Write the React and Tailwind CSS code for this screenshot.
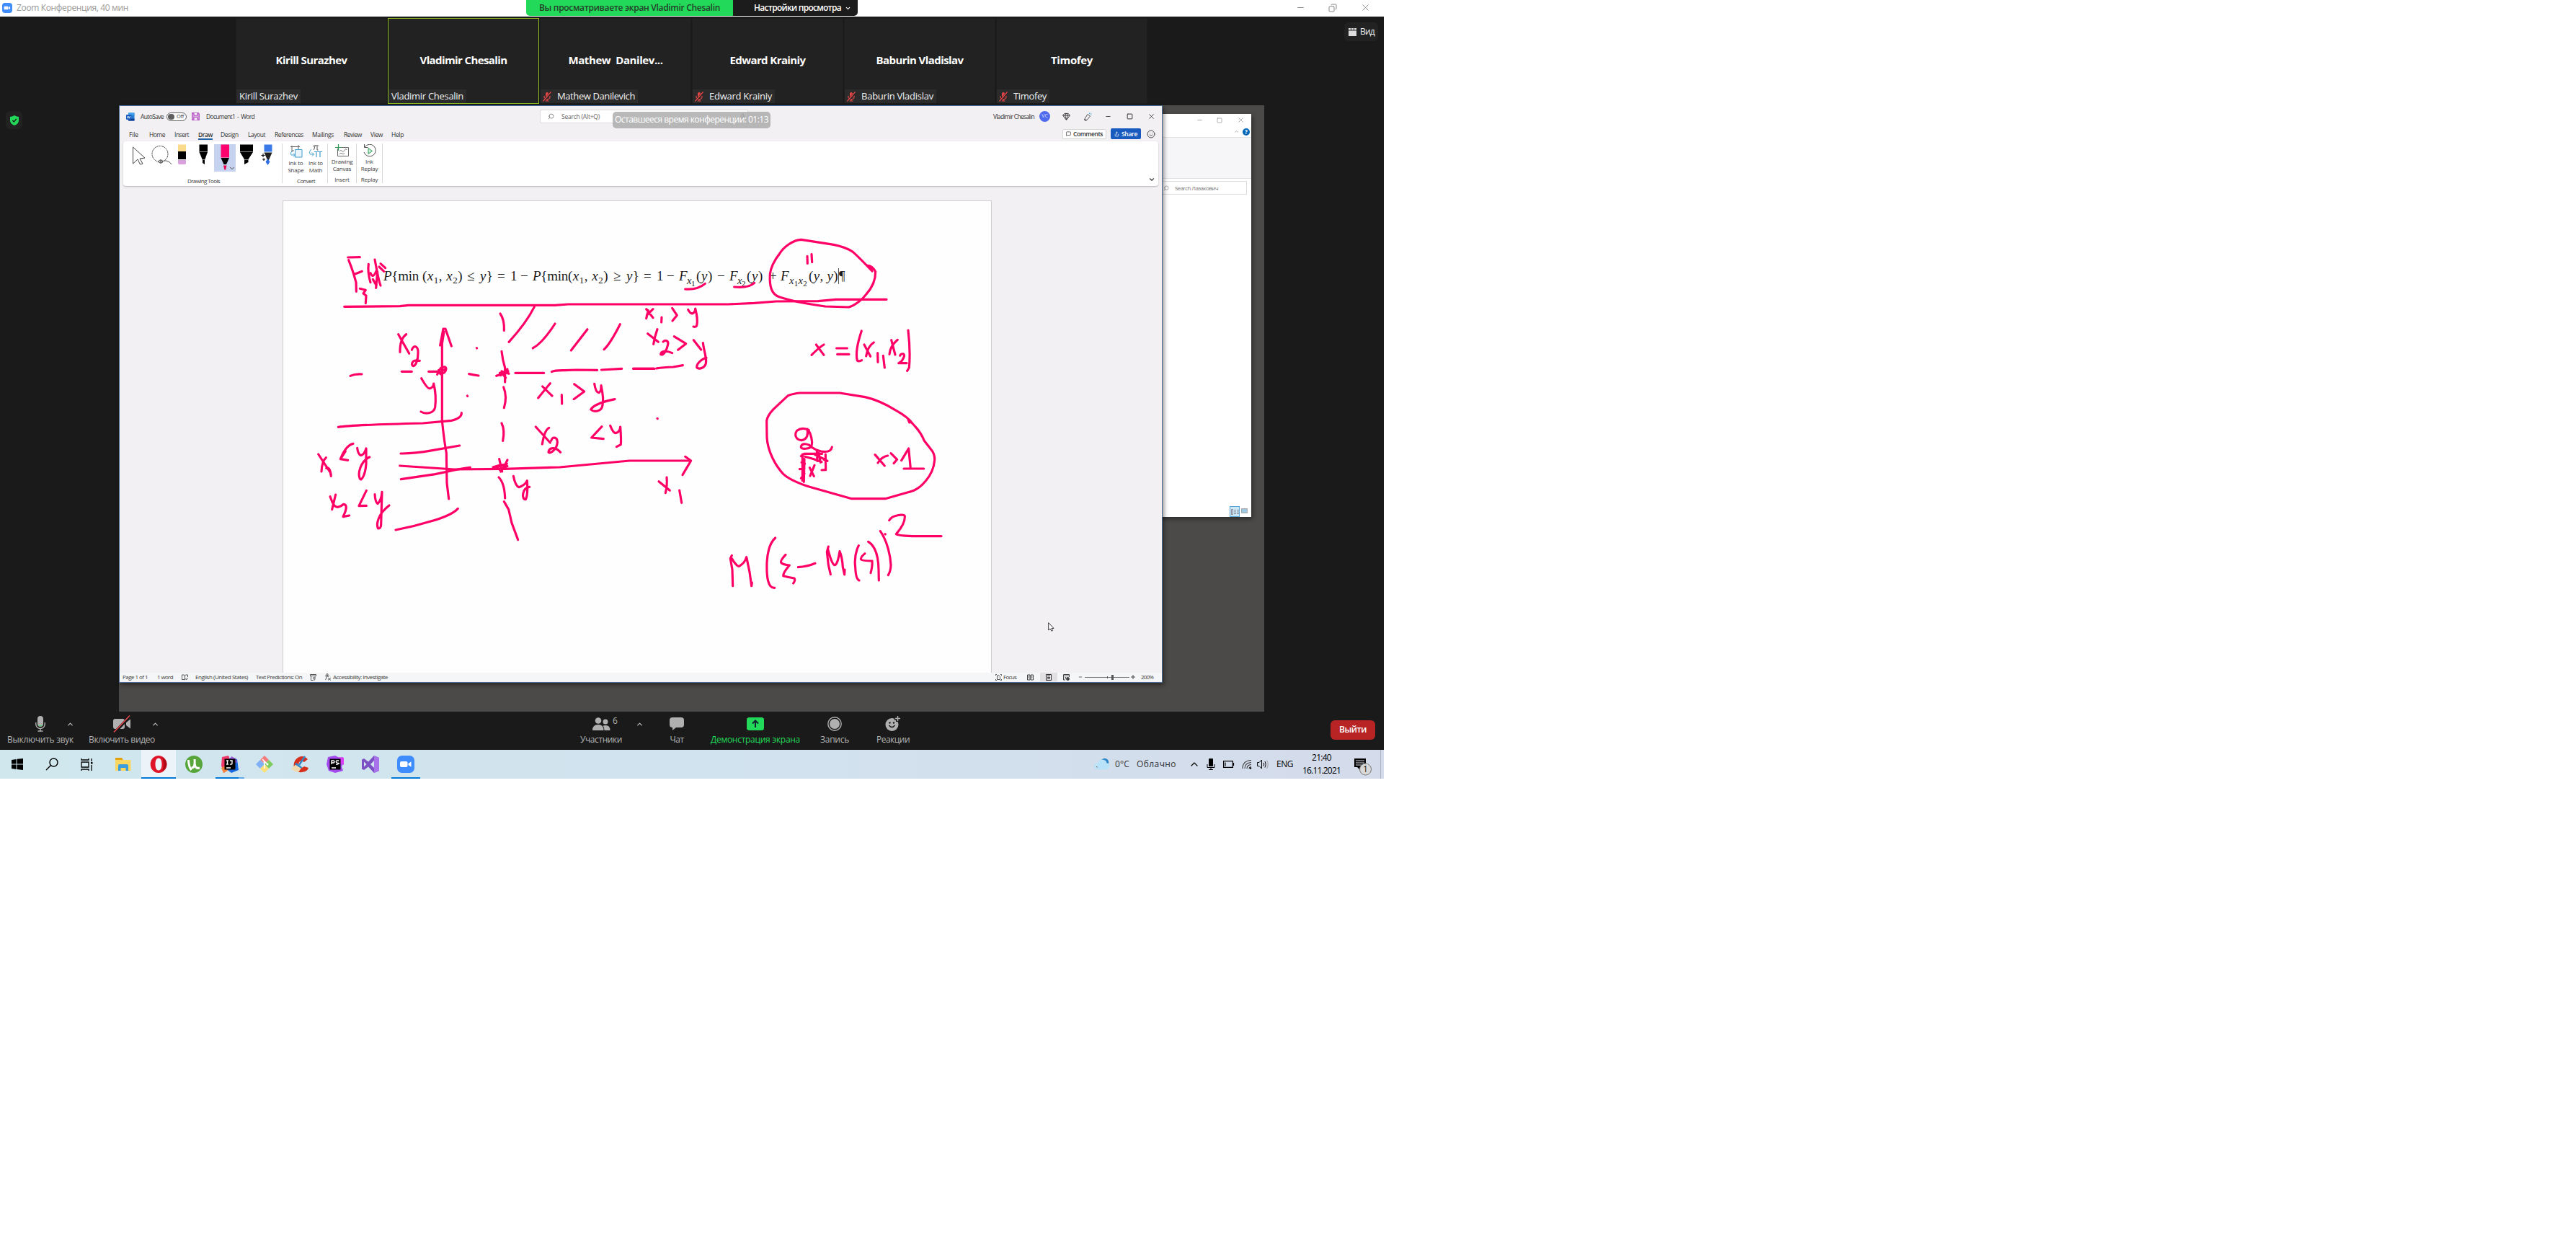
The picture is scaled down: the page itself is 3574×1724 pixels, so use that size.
import React, { useLayoutEffect, useRef } from "react";
import { Minus, Copy, X, Square, ChevronUp, ChevronDown, Search, Gem, MessageSquare, Mic, Share as ShareIcon, Smile } from "lucide-react";

/* One line of text whose tracking is adjusted to fill the width of its box. */
function Fit({ className = "", children }) {
  const box = useRef(null);
  const inner = useRef(null);
  useLayoutEffect(() => {
    const n = inner.current.textContent.length;
    inner.current.style.letterSpacing = "0px";
    const diff = box.current.clientWidth - inner.current.getBoundingClientRect().width;
    inner.current.style.letterSpacing = `${diff / n}px`;
  }, []);
  return (
    <span ref={box} className={"block shrink-0 whitespace-nowrap leading-[1.4] " + className}>
      <span ref={inner} className="inline-block whitespace-pre">{children}</span>
    </span>
  );
}

function ZoomLogo({ className }) {
  return (
    <svg viewBox="0 0 24 24" className={className}>
      <rect width="24" height="24" rx="7" fill="#3f8cfd" />
      <rect x="4.5" y="8" width="10" height="8" rx="2" fill="#fff" />
      <path d="M15.3 11 L19 8.3 V15.7 L15.3 13 Z" fill="#fff" />
    </svg>
  );
}

function TitleBar() {
  return (
    <header className="flex h-[23px] items-start bg-white text-[12px]">
      <ZoomLogo className="ml-[3px] mt-[4px] h-[14px] w-[14px]" />
      <Fit className="ml-[6px] mt-[3px] w-[155px] text-[#999]">Zoom Конференция, 40 мин</Fit>
      <div className="ml-[552px] flex h-[22px] w-[287px] items-center rounded-bl-[5px] bg-[#23d959] pl-[18px]">
        <Fit className="w-[251px] font-semibold text-[#24402a]">Вы просматриваете экран Vladimir Chesalin</Fit>
      </div>
      <div className="flex h-[22px] w-[173px] items-center rounded-br-[5px] bg-[#1c1c1c] pl-[29px] text-white">
        <Fit className="w-[121px] font-semibold">Настройки просмотра</Fit>
        <ChevronDown className="ml-[5px] h-[9px] w-[9px]" strokeWidth={3} />
      </div>
      <div className="ml-[608px] flex h-[21px] items-center text-[#888]">
        <Minus className="h-[13px] w-[13px]" strokeWidth={1.8} />
        <Copy className="ml-[32px] h-[12px] w-[12px] -scale-x-100" strokeWidth={2} />
        <X className="ml-[32px] h-[15px] w-[15px]" strokeWidth={1.6} />
      </div>
    </header>
  );
}

const people = [
  { name: "Kirill Surazhev", label: "Kirill Surazhev", nw: "w-[99px]", lw: "w-[81px]" },
  { name: "Vladimir Chesalin", label: "Vladimir Chesalin", nw: "w-[121px]", lw: "w-[100px]", active: true },
  { name: "Mathew  Danilev...", label: "Mathew Danilevich", nw: "w-[131px]", lw: "w-[108px]", muted: true },
  { name: "Edward Krainiy", label: "Edward Krainiy", nw: "w-[105px]", lw: "w-[87px]", muted: true },
  { name: "Baburin Vladislav", label: "Baburin Vladislav", nw: "w-[121px]", lw: "w-[100px]", muted: true },
  { name: "Timofey", label: "Timofey", nw: "w-[58px]", lw: "w-[46px]", muted: true },
];

function MutedMic() {
  return (
    <svg viewBox="0 0 14 14" className="mr-[7px] h-[14px] w-[14px]">
      <rect x="5" y="1" width="4" height="7.5" rx="2" fill="#e8474a" />
      <path d="M3 6 V7.2 A4 3.6 0 0 0 11 7.2 V6 M7 11 V13 M4.5 13 H9.5" stroke="#e8474a" strokeWidth="1.2" fill="none" />
      <path d="M2 13.5 L12.5 .5" stroke="#222" strokeWidth="2.6" />
      <path d="M1.5 13.5 L12.5 .5" stroke="#e8474a" strokeWidth="1.3" />
    </svg>
  );
}

function Gallery() {
  return (
    <section className="flex h-[123px] pt-[2px]">
      <div className="ml-[327px] flex h-[119px] gap-[1px]">
        {people.map((p) => (
          <div key={p.label} className={"flex h-[119px] w-[210px] flex-col justify-between border " + (p.active ? "border-[#8fbf21] bg-[#222]" : "border-[#1d1d1d] bg-[#222]")}>
            <div className="flex h-[98px] items-end justify-center pb-[30px]">
              <Fit className={"text-[15px] font-bold text-white " + p.nw}>{p.name}</Fit>
            </div>
            <div className={"flex h-[19px] items-center self-start bg-[#2b2b2b] pr-[4px] text-[13px] text-[#f2f2f2] " + (p.muted ? "pl-[2px]" : "pl-[4px]")}>
              {p.muted && <MutedMic />}
              <Fit className={p.lw}>{p.label}</Fit>
            </div>
          </div>
        ))}
      </div>
      <div className="ml-[273px] mt-[6px] flex h-[26px] w-[47px] items-center rounded-[6px] bg-[#222] pl-[6px]">
        <svg viewBox="0 0 11 11" className="h-[11px] w-[11px]" fill="#ddd">
          <path d="M0 0H3V2.4H0Z M4 0H7V2.4H4Z M8 0H11V2.4H8Z M0 3.4H11V11H0Z" />
        </svg>
        <Fit className="ml-[5px] w-[20px] text-[12px] text-[#eee]">Вид</Fit>
      </div>
    </section>
  );
}

const tabs = [
  ["File", "ml-[13px] w-[13px]"], ["Home", "ml-[15px] w-[22px]"], ["Insert", "ml-[13px] w-[20px]"],
  ["Draw", "ml-[13px] w-[20px] font-semibold"], ["Design", "ml-[11px] w-[25px]"], ["Layout", "ml-[13px] w-[24px]"],
  ["References", "ml-[13px] w-[40px]"], ["Mailings", "ml-[12px] w-[30px]"], ["Review", "ml-[14px] w-[25px]"],
  ["View", "ml-[12px] w-[17px]"], ["Help", "ml-[12px] w-[17px]"],
];

function WordTitle() {
  return (
    <div className="flex h-[31px] items-center pb-[2px] text-[8.5px] text-[#333]">
      <svg viewBox="0 0 12 12" className="ml-[9px] h-[12px] w-[12px]">
        <rect x="3" y=".5" width="8.5" height="11" rx="1" fill="#2b7cd3" />
        <rect x="3" y=".5" width="8.5" height="3" fill="#41a5ee" />
        <rect x="3" y="8.5" width="8.5" height="3" fill="#103f91" />
        <rect x="0" y="3" width="7" height="7" rx="1" fill="#185abd" />
        <path d="M1.5 5 L2.4 8.2 L3.5 5.4 L4.6 8.2 L5.5 5" stroke="#fff" strokeWidth=".8" fill="none" />
      </svg>
      <Fit className="ml-[8px] w-[32px]">AutoSave</Fit>
      <span className="ml-[4px] flex h-[12px] w-[28px] items-center rounded-full border border-[#666] bg-white pl-[1px]">
        <span className="h-[8px] w-[9px] rounded-full bg-[#5f5f5f]" />
        <Fit className="ml-[3px] w-[10px] text-[7.5px]">Off</Fit>
      </span>
      <svg viewBox="0 0 11 11" className="ml-[7px] h-[11px] w-[11px]" fill="none" stroke="#b04fc0" strokeWidth="1.2">
        <path d="M.7 .7H9L10.3 2V10.3H.7Z" fill="#dca5e3" />
        <path d="M3 .7V4H8V.7 M3 10.3V7H8V10.3" fill="#fff" />
      </svg>
      <Fit className="ml-[9px] w-[67px]">Document1  -  Word</Fit>
      <div className="ml-[396px] flex h-[19px] w-[289px] items-center rounded-[2px] border border-[#dcdade] bg-white pl-[10px] text-[#666]">
        <Search className="h-[9px] w-[9px] -scale-x-100" strokeWidth={2} />
        <Fit className="ml-[10px] w-[53px]">Search (Alt+Q)</Fit>
        <Mic className="ml-[194px] h-[9px] w-[9px]" strokeWidth={2.2} />
      </div>
      <Fit className="ml-[340px] w-[57px]">Vladimir Chesalin</Fit>
      <span className="ml-[7px] flex h-[15px] w-[15px] items-center justify-center rounded-full bg-[#4f6bed] text-[7px] text-[#d5dcff]">VC</span>
      <Gem className="ml-[17px] h-[11px] w-[11px]" strokeWidth={2} />
      <svg viewBox="0 0 12 12" className="ml-[18px] h-[12px] w-[12px]" fill="none" stroke="#444" strokeWidth=".9">
        <path d="M1.5 9.5 L6 2.5 L9.5 5 L5 10.5 Z M1.5 9.5 L2.5 11.5 L5 10.5" />
        <path d="M8.5 .5 V2 M11.5 3 L10 3.4 M11 .7 L9.8 2" stroke="#2a9fd8" />
      </svg>
      <Minus className="ml-[18px] h-[9px] w-[9px]" strokeWidth={2.4} />
      <Square className="ml-[21px] h-[9px] w-[9px]" strokeWidth={2.6} />
      <X className="ml-[20px] h-[11px] w-[11px]" strokeWidth={2} />
    </div>
  );
}

function WordTabs() {
  return (
    <div className="flex h-[18px] items-center text-[8.5px] text-[#333]">
      {tabs.map(([t, c]) => (
        <Fit key={t} className={c + (t === "Draw" ? " border-b-2 border-[#2566a8] pt-[1px]" : "")}>{t}</Fit>
      ))}
      <div className="mb-[3px] ml-[914px] flex h-[14px] w-[61px] items-center rounded-[2px] border border-[#d6d6d6] bg-white pl-[4px] text-[8.5px] font-semibold">
        <MessageSquare className="h-[7px] w-[7px]" strokeWidth={2.4} />
        <Fit className="ml-[3px] w-[41px]">Comments</Fit>
      </div>
      <div className="mb-[3px] ml-[6px] flex h-[15px] w-[42px] items-center rounded-[2px] bg-[#185abd] pl-[5px] text-[8.5px] font-semibold text-white">
        <ShareIcon className="h-[8px] w-[7px]" strokeWidth={2.4} />
        <Fit className="ml-[3px] w-[22px]">Share</Fit>
      </div>
      <Smile className="mb-[3px] ml-[8px] h-[12px] w-[12px]" strokeWidth={1.7} />
    </div>
  );
}

function Caption({ lines, title, className, children }) {
  return (
    <div className={"flex h-[55px] flex-col items-center text-[8px] leading-[10px] text-[#3c3c3c] " + className}>
      <div className="flex h-[22px] items-center">{children}</div>
      <div className="flex h-[20px] flex-col items-center text-center tracking-[-0.2px]">{lines.map((l) => <span key={l} className="whitespace-nowrap">{l}</span>)}</div>
      <div className="mt-[5px] whitespace-nowrap tracking-[-0.2px]">{title}</div>
    </div>
  );
}

function Ribbon() {
  return (
    <div className="ml-[5px] flex h-[62px] w-[1436px] rounded-[4px] bg-white pt-[3px] shadow-[0_1px_2px_rgba(0,0,0,0.25)]">
      <div className="flex h-[55px] w-[221px] flex-col border-r border-[#d8d8d8]">
        <svg viewBox="171 199 220 41" className="h-[41px] w-[220px] shrink-0" fill="none">
          <path d="M184.500 204 L201 219 L194 220 L198 227 L194.500 228 L191 221 L184.500 227 Z" stroke="#444" />
          <circle cx="222" cy="213.500" r="11" stroke="#444" strokeDasharray="2 .6" />
          <path d="M220 224 a3 2 0 1 0 6 0 a3 2 0 1 0 -6 0 M223 221 V227 M227 223 Q234 222 238 228" stroke="#444" strokeWidth=".9" />
          <path d="M247 200.500H258V210H247Z" fill="#fadb8c" />
          <path d="M247 210H258V221H247Z" fill="#000" />
          <path d="M247 222H258V226Q258 228 256 228H249Q247 228 247 226Z" fill="#d9a0dd" />
          <path d="M276.500 200.500H288V211L284 222V228L281 226V222L276.500 211Z" fill="#000" />
          <path d="M276.500 210.500H288 M281 221.500H284" stroke="#aaa" strokeWidth=".8" />
          <rect x="297" y="200" width="30" height="38" fill="#c5d3f1" />
          <path d="M306.500 200.500H318V218.500H306.500Z" fill="#ff006e" />
          <path d="M306.500 219H318L314 228H310.500Z" fill="#000" />
          <path d="M310 229.500H314.500L313 235.500H311.500Z" fill="#e8004f" />
          <path d="M319 232 L322 234.500 L325 232" stroke="#555" />
          <path d="M333 200.500H351V211L344.500 221V225L339 228V221L333 211Z" fill="#000" />
          <path d="M333 210.500H351 M339 221.500H345" stroke="#aaa" strokeWidth=".8" />
          <path d="M366.500 200.500H377.500V210.500H366.500Z" fill="#3a7ae8" />
          <path d="M366.500 211.500H377.500L373 222H371Z" fill="#222" />
          <path d="M371.500 220 L374.500 224.500 L371.500 229 L368.500 224.500Z" fill="#2f6fe0" />
          <path d="M365 213V218 M362.500 215.500H367.500 M366 219.500V223 M364 221H368" stroke="#111" strokeWidth="1.200" />
        </svg>
        <Fit className="ml-[89px] mt-[5px] w-[45px] text-[8px] text-[#3c3c3c]">Drawing Tools</Fit>
      </div>
      <div className="relative flex h-[55px] w-[63px] border-r border-[#d8d8d8]">
        <Caption className="ml-[3px] w-[31px]" lines={["Ink to", "Shape"]} title="">
          <svg viewBox="0 0 18 18" className="h-[18px] w-[18px]" fill="none">
            <path d="M3 1V10 M1 2.500H14 M12 0V6 M3 8H6" stroke="#666" />
            <path d="M7.500 6.500H17V17H7.500Z" stroke="#3f9fd0" fill="#eaf5fb" />
            <path d="M4 8Q0 11 2 14H7M5 11.500L7.500 14L5 16.500" stroke="#3f9fd0" />
          </svg>
        </Caption>
        <Caption className="w-[24px]" lines={["Ink to", "Math"]} title="">
          <svg viewBox="0 0 18 18" className="h-[18px] w-[18px]" fill="none">
            <path d="M5 2Q7 0 13 1 M8 1.500L6.500 7 M11 1.500V7H12.500" stroke="#555" />
            <path d="M7 9.500H18 M10 9.500V17 M15 9.500V17" stroke="#3f9fd0" strokeWidth="1.200" />
            <path d="M3 6Q-1 10 1.500 13H6M4 10.500L6.500 13L4 15.500" stroke="#3f9fd0" />
          </svg>
        </Caption>
        <Fit className="absolute left-[20px] top-[46px] w-[25px] text-[8px] text-[#3c3c3c]">Convert</Fit>
      </div>
      <Caption className="w-[40px] border-r border-[#d8d8d8]" lines={["Drawing", "Canvas"]} title="Insert">
        <svg viewBox="0 0 19 18" className="h-[18px] w-[19px]" fill="none">
          <path d="M3.500 6V16.500H18.500V4.500H9" stroke="#666" />
          <path d="M4.500 0V9 M0 4.500H9" stroke="#2f9a55" strokeWidth="1.200" />
          <path d="M6 10Q8 7 9.500 9.500T13 8.500T16 8M6 14Q8 11 9.500 13T13 12.500" stroke="#777" />
        </svg>
      </Caption>
      <Caption className="w-[36px] border-r border-[#d8d8d8]" lines={["Ink", "Replay"]} title="Replay">
        <svg viewBox="0 0 20 18" className="h-[18px] w-[20px]" fill="none">
          <path d="M3 4A8.300 8.300 0 1 1 2 11 M2.500 0V4.500H7.500" stroke="#555" />
          <path d="M8 5.500L13.500 9.500L8 13.500Z" stroke="#2f9a55" fill="#c8ecd5" />
        </svg>
      </Caption>
      <ChevronDown className="ml-[1062px] mt-[45px] h-[10px] w-[10px] text-[#333]" strokeWidth={2.6} />
    </div>
  );
}

const Sub = ({ children }) => <span className="relative top-[5px] text-[14.5px]">{children}</span>;
const Subsub = ({ children }) => <span className="relative top-[8px] text-[11px] not-italic">{children}</span>;
const Index = ({ children }) => <span className="relative top-[4px] text-[13px] not-italic">{children}</span>;
const Up = ({ children }) => <span className="not-italic">{children}</span>;

function Formula() {
  return (
    <div className="flex items-baseline pl-[139px] pt-[91px] font-['Liberation_Serif',serif] text-[19px] italic text-[#1a1a1a]">
      <Fit className="w-[49px]">P<Up>{"{min"}</Up></Fit>
      <Fit className="ml-[5px] w-[56px]"><Up>(</Up>x<Index>1</Index><Up>,</Up> x<Index>2</Index><Up>)</Up></Fit>
      <Fit className="ml-[6px] w-[12px]"><Up>≤</Up></Fit>
      <Fit className="ml-[6px] w-[18px]">y<Up>{"}"}</Up></Fit>
      <Fit className="ml-[6px] w-[12px]"><Up>=</Up></Fit>
      <Fit className="ml-[6px] w-[9px]"><Up>1</Up></Fit>
      <Fit className="ml-[5px] w-[12px]"><Up>−</Up></Fit>
      <Fit className="ml-[5px] w-[49px]">P<Up>{"{min"}</Up></Fit>
      <Fit className="w-[56px]"><Up>(</Up>x<Index>1</Index><Up>,</Up> x<Index>2</Index><Up>)</Up></Fit>
      <Fit className="ml-[7px] w-[12px]"><Up>≥</Up></Fit>
      <Fit className="ml-[6px] w-[18px]">y<Up>{"}"}</Up></Fit>
      <Fit className="ml-[6px] w-[12px]"><Up>=</Up></Fit>
      <Fit className="ml-[6px] w-[9px]"><Up>1</Up></Fit>
      <Fit className="ml-[5px] w-[12px]"><Up>−</Up></Fit>
      <Fit className="ml-[5px] w-[22px]">F<Sub>x</Sub><Subsub>1</Subsub></Fit>
      <Fit className="ml-[2px] w-[23px]"><Up>(</Up>y<Up>)</Up></Fit>
      <Fit className="ml-[6px] w-[12px]"><Up>−</Up></Fit>
      <Fit className="ml-[5px] w-[22px]">F<Sub>x</Sub><Subsub>2</Subsub></Fit>
      <Fit className="ml-[2px] w-[23px]"><Up>(</Up>y<Up>)</Up></Fit>
      <Fit className="ml-[8px] w-[12px]"><Up>+</Up></Fit>
      <Fit className="ml-[4px] w-[37px]">F<Sub>x</Sub><Subsub>1</Subsub><Sub>x</Sub><Subsub>2</Subsub></Fit>
      <Fit className="ml-[2px] w-[41px]"><Up>(</Up>y<Up>,</Up> y<Up>)</Up></Fit>
      <span className="h-[22px] w-px self-center bg-[#555]" />
      <Fit className="w-[9px]"><Up>¶</Up></Fit>
    </div>
  );
}

const inkLeft = [
  "M248 171L298 170", "M251 182Q264 214 272 240L282 275L283 313", "M278 240L307 229",
  "M334 199C330 228 335 252 342 275", "M342 236Q352 262 366 228L371 232L365 298", "M360 180C368 220 374 262 384 288M352 262L366 286", "M384 197L404 215M378 210L398 229",
  "M298 301L322 307L312 321L324 330L322 362",
  "M233 376L465 374L500 370L1110 370L1165 366L1830 366L1940 361L2030 354L2205 353L2280 346L2490 346",
  "M882 405Q900 430 898 475", "M1024 377Q990 445 918 523", "M1110 447Q1060 525 1018 549", "M1245 470L1177 558", "M1381 449Q1340 530 1314 554",
  "M458 491L503 571M491 491Q464 510 465 565", "M514 556C522 532 542 540 540 570C540 600 530 622 520 623C510 620 515 600 530 600L547 601",
  "M632 537L645 468L654 468L679 540M648 480L640 530L640 850Q648 930 658 985L660 1110L668 1176", "M584 646L625 646", "M472 646L514 646", "M258 664Q278 655 306 657",
  "M620 658L634 632Q655 620 657 635Q655 655 632 655Q640 640 650 638M626 640L640 662", "M784 548L785 549", "M745 747L746 748", "M752 656Q770 660 792 663",
  "M888 562Q892 600 902 630L902 690", "M866 664L885 658L915 650M880 652L915 644M884 662L912 636M888 645L918 655M895 660L905 672", "M945 652L1064 652", "M1096 647Q1110 640 1150 641L1200 639L1286 640", "M1303 639L1388 634", "M1436 634L1524 634",
  "M554 674Q580 720 590 716Q604 712 605 696C616 740 614 770 611 795C605 822 570 824 552 813",
  "M208 877Q260 868 560 861L680 850Q722 840 721 818",
  "M1090 695Q1065 725 1040 756M1058 708Q1078 728 1098 747", "M1138 743L1139 780", "M1190 698L1232 729L1188 761", "M1274 697Q1280 734 1292 734Q1303 730 1302 704Q1314 760 1308 785C1306 815 1270 815 1259 804Q1275 778 1359 761",
  "M896 711Q912 750 898 797", "M888 861Q902 890 893 934",
  "M1030 876L1090 942M1085 880Q1066 890 1057 948", "M1094 934C1100 914 1120 918 1120 940C1118 970 1092 988 1083 982C1085 962 1110 956 1133 982", "M1305 875L1262 921L1312 926", "M1340 871Q1352 902 1363 902Q1380 898 1382 876Q1386 930 1384 950L1366 959",
  "M468 987Q520 988 600 974L713 954", "M464 1038Q560 1044 690 1053L900 1051L1130 1044L1420 1017L1670 1017", "M469 1094L612 1073L706 1053Q730 1048 757 1045",
  "M125 990L175 1066L178 1081M157 1004Q140 1020 138 1062M158 1048Q172 1040 178 1078", "M270 946Q240 952 217 1010L248 1015M238 978L217 1010", "M287 964Q290 990 302 995Q316 992 324 966L324 1030C320 1080 304 1102 298 1092C288 1070 300 1020 338 1002",
  "M852 1044L884 1034L912 1040M878 1010L890 1062M912 1014Q895 1050 884 1062M860 1048L910 1030M880 1055L905 1045",
  "M876 1086Q900 1110 902 1173", "M898 1187L917 1220L930 1276L956 1346", "M937 1081Q945 1122 960 1127Q985 1120 994 1100Q998 1160 988 1178C970 1180 972 1130 1004 1126",
  "M174 1166Q182 1190 192 1204Q205 1218 230 1198Q248 1200 236 1232L228 1250L254 1245M197 1158L182 1220", "M325 1141L294 1205L325 1204", "M360 1157Q362 1190 372 1196Q388 1180 390 1147L386 1285Q384 1302 373 1298C366 1280 372 1240 420 1203",
  "M447 1305Q520 1292 590 1270Q680 1245 706 1216",
];

const inkRight = [
  "M660 166L661 196M678 158L680 191",
  "M930 228Q880 175 850 148Q820 128 770 118L635 97C600 98 560 130 545 155Q510 200 505 240C502 290 510 325 545 336Q610 358 735 375L832 378C860 370 890 345 905 325Q945 280 944 230Q930 205 910 205Q920 215 928 222",
  "M152 303Q205 306 235 280", "M356 294Q415 300 440 277",
  "M-8 388L-2 392L-10 425M-10 386L18 422M18 386L-8 412", "M54 420L53 441", "M98 382L118 412L99 435", "M164 388Q170 402 181 405Q194 400 194 384Q206 430 200 455Q196 462 186 459",
  "M-4 488L40 523M36 470Q25 500 20 532", "M60 522C70 512 84 518 80 534C75 560 60 580 50 575C50 562 70 556 98 569", "M106 500L155 530L122 556", "M187 515L218 555M226 527C232 570 245 600 236 618C228 634 205 638 200 628C200 612 225 590 240 589",
  "M-64 634L22 634", "M32 633Q60 628 102 627L142 620",
  "M678 577Q710 545 729 534M697 534L729 577", "M782 549L826 549M785 574L834 574", "M886 477Q858 560 868 600Q875 606 887 599", "M897 534L923 583M937 525Q912 540 905 582", "M953 569L954 607M976 580L982 630", "M1002 574Q1005 540 1036 514M1010 515L1026 576", "M1046 580C1050 568 1070 570 1062 586Q1055 606 1040 611L1074 611", "M1080 474Q1090 560 1084 630L1076 643",
  "M1098 862Q1080 836 1030 808Q960 765 900 752L795 735L630 735Q600 738 580 746L520 802Q495 828 491 850L492 920C495 980 530 1040 560 1072Q590 1100 670 1126L845 1175L985 1175L1085 1147C1130 1138 1185 1080 1190 1015Q1192 990 1175 970L1147 934Q1130 890 1080 845L1085 858",
  "M667 890Q640 875 617 892C605 908 612 930 636 932C662 928 664 905 660 885Q676 900 680 940Q680 965 660 966Q632 970 634 958Q640 940 668 952Q690 972 718 978Q758 985 763 960",
  "M634 998L648 988L722 988M640 990L640 1100M650 1000Q690 1010 720 1022M648 1010L646 1105M636 1024L650 1030M628 1052L648 1050M634 1090L648 1070M700 975L702 1018M708 984L715 1024M692 992L730 1010M736 990L737 1055L720 1056M728 1012L744 1018",
  "M670 1046L688 1082M690 1036L672 1080", "M942 992L982 1038M995 996Q970 1000 954 1026", "M1008 986L1034 1012L1020 1028", "M1052 1016L1082 966L1090 1048M1062 1050L1145 1050",
  "M36 841L37 842", "M152 1000L176 1017L141 1076", "M42 1103L88 1141M75 1086Q78 1120 70 1151", "M128 1140L137 1192",
];

const inkBottom = [
  "M106 241L100 254L108 300L110 368M106 254Q130 294 140 284Q160 272 167 248L180 310L188 368L190 354",
  "M287 168Q256 196 252 270C250 330 256 378 284 376", "M330 238Q305 265 312 272Q320 280 346 282Q320 312 320 326Q340 332 366 336Q372 344 362 357", "M382 290Q420 288 453 274",
  "M508 204L502 226L508 280L517 320M506 215Q525 290 538 280Q548 270 555 224Q566 250 568 290L575 321L576 300",
  "M634 200Q614 240 620 290Q622 340 636 345", "M660 233Q640 250 644 258Q650 264 690 264Q692 285 684 314", "M674 184C700 200 716 240 717 300L718 345",
  "M724 140C752 180 766 240 768 280Q768 305 757 323", "M744 152L745 153", "M761 95C775 70 828 68 826 78C828 110 800 140 790 152Q800 160 880 161L978 161",
];

function Ink() {
  return (
    <svg viewBox="392 279 983 654" className="absolute left-[-1px] top-0 h-[654px] w-[983px]" fill="none" stroke="#ff0066" strokeWidth="9.500" strokeLinecap="round" strokeLinejoin="round">
      <g transform="translate(400 300) scale(.33333)">{inkLeft.map((d) => <path key={d} d={d} />)}</g>
      <g transform="translate(900 300) scale(.33333)">{inkRight.map((d) => <path key={d} d={d} />)}</g>
      <g transform="translate(980 690) scale(.33333)">{inkBottom.map((d) => <path key={d} d={d} />)}</g>
    </svg>
  );
}

function StatusBar() {
  return (
    <div className="flex h-[12px] items-center bg-[#f5f6f8] text-[8px] text-[#3c3c3c]">
      <Fit className="ml-[4px] w-[35px]">Page 1 of 1</Fit>
      <Fit className="ml-[13px] w-[22px]">1 word</Fit>
      <svg viewBox="0 0 9 9" className="ml-[12px] h-[9px] w-[9px]" fill="none" stroke="#444" strokeWidth=".9"><path d="M.5 1H3.500L4.500 2V8L3.500 7.500H.5Z M4.500 2L5.500 1H8.500V4 M5.500 6L6.500 8L8.500 5" /></svg>
      <Fit className="ml-[10px] w-[73px]">English (United States)</Fit>
      <Fit className="ml-[11px] w-[64px]">Text Predictions: On</Fit>
      <svg viewBox="0 0 9 9" className="ml-[11px] h-[9px] w-[9px]" fill="none" stroke="#444" strokeWidth=".9"><path d="M.5 .5H8.500V2.500H.5Z M1.500 2.500V8.500H4 M8 4Q4 4 4.500 6Q8 5.500 7.500 7Q6 9 4.500 8" /></svg>
      <svg viewBox="0 0 10 10" className="ml-[11px] h-[10px] w-[10px]" fill="none" stroke="#444" strokeWidth=".9"><circle cx="4" cy="1.500" r="1" /><path d="M1 3.500H7M3 3.500V6L1.500 9M5 3.500V5M5 6L9 9.500M9 6L5 9.500" /></svg>
      <Fit className="ml-[2px] w-[76px]">Accessibility: Investigate</Fit>
      <svg viewBox="0 0 9 9" className="ml-[843px] h-[9px] w-[9px]" fill="none" stroke="#444" strokeWidth=".9"><path d="M2 .5H.5V2M.5 7V8.500H2M7 .5H8.500V2M8.500 7V8.500H7M2.500 2H5L6.500 3.500V7.500H2.500Z" /></svg>
      <Fit className="ml-[2px] w-[18px]">Focus</Fit>
      <svg viewBox="0 0 9 9" className="ml-[15px] h-[9px] w-[9px]" fill="none" stroke="#444"><path d="M.5 1H4V8H.5Z M5 1H8.500V8H5Z M1.500 3H3M6 3H7.500M1.500 5H3M6 5H7.500" /></svg>
      <span className="ml-[9px] flex h-[12px] w-[24px] items-center justify-center bg-[#e2e0e3]">
        <svg viewBox="0 0 8 9" className="h-[9px] w-[8px]" fill="none" stroke="#333"><path d="M.5 .5H7.500V8.500H.5Z M2 2.500H6M2 4.500H6M2 6.500H6" /></svg>
      </span>
      <svg viewBox="0 0 9 9" className="ml-[8px] h-[9px] w-[9px]" fill="none" stroke="#444"><path d="M8.500 4V.5H.5V8H3M.5 2.500H8.500M2.500 4.500H4M2.500 6.500H4" /><circle cx="6.500" cy="6.500" r="2" fill="#444" /></svg>
      <Minus className="ml-[12px] h-[6px] w-[6px]" strokeWidth={3} />
      <span className="ml-[3px] flex h-[7px] w-[62px] items-center">
        <span className="h-px w-[31px] bg-[#777]" /><span className="h-[3px] w-px bg-[#555]" />
        <span className="h-px w-[5px] bg-[#777]" /><span className="h-[7px] w-[3px] bg-[#555]" /><span className="h-px w-[22px] bg-[#777]" />
      </span>
      <svg viewBox="0 0 6 6" className="ml-[2px] h-[6px] w-[6px]" stroke="#444"><path d="M0 3H6M3 0V6" /></svg>
      <Fit className="ml-[8px] w-[17px]">200%</Fit>
    </div>
  );
}

function WordWindow() {
  return (
    <div className="absolute left-0 top-0 flex h-[801px] w-[1448px] flex-col border border-[#4a6b96] bg-[#f2f0f3] shadow-[2px_3px_6px_rgba(0,0,0,0.45)]">
      <WordTitle />
      <WordTabs />
      <Ribbon />
      <div className="mt-[20px] flex h-[655px]">
        <div className="relative ml-[226px] h-[655px] w-[984px] border-l border-r border-t border-[#cfcdd1] bg-[#fefefe]">
          <Formula />
          <Ink />
        </div>
        <svg viewBox="0 0 9 13" className="ml-[78px] mt-[585px] h-[13px] w-[9px]"><path d="M.7 .7V11L3 9L5 12.300L6.500 11.500L5 8.500H8Z" fill="#fff" stroke="#222" strokeWidth=".9" /></svg>
      </div>
      <StatusBar />
      <div className="absolute left-[684px] top-[8px] flex h-[23px] w-[219px] items-center rounded-[5px] bg-[#a8a8a8]/80 pl-[3px]">
        <Fit className="w-[213px] text-[12px] text-white">Оставшееся время конференции: 01:13</Fit>
      </div>
    </div>
  );
}

function ExplorerWindow() {
  return (
    <div className="absolute left-[1440px] top-[12px] flex h-[559px] w-[131px] flex-col bg-white shadow-[2px_3px_6px_rgba(0,0,0,0.4)]">
      <div className="flex h-[17px] items-center pl-[55px] text-[#888]">
        <Minus className="h-[9px] w-[9px]" strokeWidth={2} />
        <Square className="ml-[19px] h-[8px] w-[8px]" strokeWidth={2} />
        <X className="ml-[20px] h-[11px] w-[11px]" strokeWidth={1.6} />
      </div>
      <div className="flex h-[16px] items-center border-b border-[#e2e2e2] pl-[107px]">
        <ChevronUp className="h-[7px] w-[7px] text-[#888]" strokeWidth={2.5} />
        <span className="ml-[5px] flex h-[10px] w-[10px] items-center justify-center rounded-full bg-[#0067b8] text-[8px] font-bold text-white">?</span>
      </div>
      <div className="h-[57px] border-b border-[#e2e2e2] bg-[#f6f5f8]" />
      <div className="ml-[1px] mt-[3px] flex h-[19px] w-[124px] items-center border border-[#ddd] pl-[7px] text-[8px] text-[#777]">
        <Search className="h-[8px] w-[8px] -scale-x-100" strokeWidth={1.8} />
        <Fit className="ml-[8px] w-[60px]">Search Лазакович</Fit>
      </div>
      <div className="flex grow items-end pl-[101px]">
        <span className="flex h-[15px] w-[14px] items-center justify-center border border-[#5aa5d6] bg-[#cce8f7]">
          <svg viewBox="0 0 11 8" className="h-[8px] w-[11px]" fill="none" stroke="#8a8a9a"><path d="M.5 .5H2.500V7.500H.5Z M4 1.500H7M8 1.500H11M4 4H7M8 4H11M4 6.500H7M8 6.500H11" /></svg>
        </span>
        <span className="mb-[5px] ml-[2px] h-[7px] w-[9px] border border-[#aaa] bg-[#9cc8e4]" />
      </div>
    </div>
  );
}

function Middle() {
  return (
    <section className="flex h-[841px]">
      <div className="w-[165px] pl-[8px] pt-[8px]">
        <div className="flex h-[25px] w-[23px] items-center justify-center rounded-[6px] bg-[#222]">
          <svg viewBox="0 0 12 14" className="h-[14px] w-[12px]"><path d="M6 0Q9 2 12 2V7Q12 12 6 14Q0 12 0 7V2Q3 2 6 0Z" fill="#23d959" /><path d="M3.300 7L5.300 9L8.800 5" stroke="#1a1a1a" strokeWidth="1.400" fill="none" /></svg>
        </div>
      </div>
      <div className="relative h-[841px] w-[1589px] bg-[#4c4a48]">
        <ExplorerWindow />
        <WordWindow />
      </div>
    </section>
  );
}

function Tool({ className, textClass, label, icon }) {
  return (
    <div className={"flex shrink-0 flex-col items-center pt-[4px] text-[12px] text-[#b4b4b4] " + className}>
      <div className="flex h-[26px] items-center">{icon}</div>
      <Fit className={"mt-[1px] " + textClass}>{label}</Fit>
    </div>
  );
}

const Caret = ({ className }) => <ChevronUp className={"mt-[12px] h-[11px] w-[11px] shrink-0 text-[#b4b4b4] " + className} strokeWidth={3} />;

function Toolbar() {
  return (
    <section className="flex h-[53px] items-start">
      <Tool className="ml-[10px] w-[92px]" textClass="w-[92px]" label="Выключить звук" icon={
        <svg viewBox="0 0 14 22" className="h-[22px] w-[14px]" fill="none"><rect x="3" y="0" width="8" height="15" rx="4" fill="#b0b0b0" /><path d="M4 12Q7 16 10 12" stroke="#23d959" /><path d="M.8 9V11.500A6.200 6 0 0 0 13.200 11.500V9M7 17V21M3.500 21H10.500" stroke="#b0b0b0" strokeWidth="1.400" /></svg>} />
      <Caret className="ml-[-10px]" />
      <Tool className="ml-[20px] w-[92px]" textClass="w-[92px]" label="Включить видео" icon={
        <svg viewBox="0 0 26 24" className="h-[24px] w-[26px]"><rect x="1" y="5" width="16" height="14" rx="3" fill="#b0b0b0" /><path d="M19 10L25 5.500V18.500L19 14Z" fill="#b0b0b0" /><path d="M3 24L25 1" stroke="#1a1a1a" strokeWidth="4" /><path d="M2 23.500L24 .5" stroke="#e8474a" strokeWidth="1.500" /></svg>} />
      <Caret className="ml-[-5px]" />
      <div className="ml-[584px] flex w-[58px] flex-col items-center pt-[4px] text-[12px] text-[#b4b4b4]">
        <div className="flex h-[26px] w-[58px] items-center pl-[17px]">
          <svg viewBox="0 0 25 18" className="h-[18px] w-[25px] shrink-0" fill="#b0b0b0"><circle cx="8" cy="4.500" r="4.300" /><circle cx="18" cy="6" r="3.500" /><path d="M0 18Q0 10 8 10Q15.500 10 15.500 18Z" /><path d="M16.500 18Q16.500 13.500 14.500 11.500Q24.500 9 24.500 18Z" /></svg>
          <Fit className="mb-[7px] ml-[3px] w-[7px]">6</Fit>
        </div>
        <Fit className="mt-[1px] w-[58px]">Участники</Fit>
      </div>
      <Caret className="ml-[19px]" />
      <Tool className="ml-[35px] w-[22px]" textClass="w-[19px]" label="Чат" icon={<svg viewBox="0 0 20 18" className="h-[18px] w-[20px]"><path d="M4 0H16Q20 0 20 4V10Q20 14 16 14H9L4 18V14Q0 14 0 10V4Q0 0 4 0Z" fill="#b0b0b0" /></svg>} />
      <Tool className="ml-[36px] w-[124px] text-[#23d959]!" textClass="w-[124px]" label="Демонстрация экрана" icon={<svg viewBox="0 0 24 18" className="h-[18px] w-[24px]"><rect width="24" height="18" rx="3.500" fill="#23d959" /><path d="M12 14V5M8 8.500L12 4.500L16 8.500" stroke="#123" strokeWidth="2" fill="none" /></svg>} />
      <Tool className="ml-[28px] w-[40px]" textClass="w-[40px]" label="Запись" icon={<svg viewBox="0 0 20 20" className="h-[20px] w-[20px]"><circle cx="10" cy="10" r="9.200" stroke="#b0b0b0" strokeWidth="1.400" fill="none" /><circle cx="10" cy="10" r="7" fill="#b0b0b0" /></svg>} />
      <Tool className="ml-[38px] w-[46px]" textClass="w-[46px]" label="Реакции" icon={<svg viewBox="0 0 22 22" className="h-[22px] w-[22px]"><circle cx="9.500" cy="12" r="9" fill="#b0b0b0" /><circle cx="6.500" cy="9.500" r="1.200" fill="#1a1a1a" /><circle cx="12" cy="9.500" r="1.200" fill="#1a1a1a" /><path d="M5.500 13Q9.500 18 13.500 13" stroke="#1a1a1a" strokeWidth="1.500" fill="none" /><path d="M17 0V8M13 4H21" stroke="#1a1a1a" strokeWidth="4" /><path d="M17.500 0V7M14 3.500H21" stroke="#b0b0b0" strokeWidth="1.500" /></svg>} />
      <div className="ml-[584px] mt-[12px] flex h-[27px] w-[62px] items-center justify-center rounded-[6px] bg-[#b82424] text-white"><Fit className="w-[38px] text-[12px] font-semibold">Выйти</Fit></div>
    </section>
  );
}

const Ic = ({ children, className = "" }) => <span className={"flex h-[40px] w-[49px] shrink-0 items-center justify-center " + className}><svg viewBox="0 0 24 24" className="h-[24px] w-[24px] shrink-0" fill="none">{children}</svg></span>;

function Taskbar() {
  return (
    <footer className="flex h-[40px] items-center bg-linear-to-r from-[#d0e7ee] via-[#d1e3ee] to-[#d4dbea] text-[12px] text-black">
      <Ic className="w-[48px]!"><path d="M4 6L10.500 5V11.500H4Z M11.500 4.800L20 4V11.500H11.500Z M4 12.500H10.500V19L4 18Z M11.500 12.500H20V20L11.500 19Z" fill="#000" /></Ic>
      <Ic className="w-[48px]!"><circle cx="14.500" cy="9.500" r="5.500" stroke="#000" strokeWidth="1.400" /><path d="M10.500 13.500L4 20" stroke="#000" strokeWidth="1.500" /></Ic>
      <Ic className="w-[50px]!"><path d="M4 4V6H14V4 M4 9H14V16H4Z M4 21V19H14V21 M18 4V8M18 13V21" stroke="#000" strokeWidth="1.300" /><rect x="17" y="9" width="2.500" height="2.500" fill="#000" /></Ic>
      <Ic className="w-[50px]!"><path d="M1 3H10L11.500 5V8H1Z" fill="#e3a20c" /><path d="M1 6H22.500V21H1Z" fill="#fdd662" /><path d="M5 21V14Q5 12 7 12H17Q19 12 19 14V21H15.500V17H8.500V21Z" fill="#3d9cdb" /></Ic>
      <Ic className="w-[48px]! border-b-2 border-[#0078d7] bg-[#edf4f9] pt-[2px]"><path fillRule="evenodd" d="M12 0A11.300 12 0 1 1 12 24A11.300 12 0 1 1 12 0Z M12 3.500C8.500 3.500 7.500 8 7.500 12S8.500 20.500 12 20.500S16.500 16 16.500 12S15.500 3.500 12 3.500Z" fill="#e01428" /><path d="M17 2Q23.500 6 23.500 12T17 22Q21 12 17 2Z" fill="#b00a18" /></Ic>
      <Ic className="w-[50px]!"><circle cx="12" cy="12" r="12" fill="#58a53c" /><path d="M4.500 6Q5 16 8.500 20M8.500 16.500Q14 18 13 5M13 11Q14 19 20 17" stroke="#fff" strokeWidth="3" /></Ic>
      <span className="flex h-[40px] w-[49px] shrink-0 flex-col items-center">
        <svg viewBox="0 0 24 24" className="mt-[8px] h-[24px] w-[24px]" fill="none"><path d="M1 2L10 0L13 8L4 24L0 14Z" fill="#f0386b" /><path d="M12 3L22 5L24 20L14 24L6 18Z" fill="#1769e0" /><path d="M14 1L20 4L22 10L10 9Z" fill="#9a58d8" /><path d="M0 17L6 14L9 21L3 24Z" fill="#f5813c" /><rect x="4.500" y="4.500" width="15" height="15" fill="#000" /><path d="M7 7H10M8.500 7V12M7 12H10M12 7H15V11Q15 12.500 12 12M7 17H13" stroke="#fff" strokeWidth="1.400" /></svg>
        <span className="mt-[6px] flex h-[2px] w-[40px]"><span className="h-[2px] w-[32px] bg-[#0078d7]" /><span className="h-[2px] w-[8px] bg-[#5fa9e6]" /></span>
      </span>
      <Ic className="w-[48px]!"><path d="M12 0L18 6L12 11.500L6 6Z" fill="#f27d7d" /><path d="M18 6L24 12L18 18L12 12Z" fill="#80cc5c" /><path d="M6 6L12 12L6 18L0 12Z" fill="#7fb0f8" /><path d="M12 12L18 18L12 24L6 18Z" fill="#fbe07a" /><path d="M9 5L16 12M12 8V18" stroke="#fff" strokeWidth="1.500" /><circle cx="12" cy="9" r="1.500" fill="#fff" /><circle cx="16" cy="12" r="1.500" fill="#fff" /></Ic>
      <Ic className="w-[49px]!"><path d="M23 5Q16 -2 9 3T4 17Q7 24 15 23T24 17L18 15Q15 18 12 16T11 9Q14 6 18 9Z" fill="#d5301c" /><path d="M19 1L11 13" stroke="#3286c9" strokeWidth="2.500" /><path d="M8 11L15 16L10 23Q3 22 0 18Z" fill="#f0d9ae" /><path d="M7 10L15 16L14 18L5 12Z" fill="#3286c9" /></Ic>
      <Ic className="w-[49px]!"><path d="M2 2L12 0L18 3L23 2L24 10L21 15L23 21L12 24L3 21L0 12Z" fill="#a44bef" /><path d="M17 2L24 3L24 13L18 10Z" fill="#d93df5" /><rect x="4.500" y="4.500" width="15" height="15" fill="#000" /><path d="M7 12V7H9.500Q11 7 11 8.500T9.500 10H7M17 7H14Q12.500 8.500 14 9.500T17 10.500T15 12H13M7 17H13" stroke="#fff" strokeWidth="1.400" /></Ic>
      <Ic className="w-[49px]!"><path fillRule="evenodd" d="M17 0L24 3V21L17 24L9 15.500L3 20L0 18.500V5.500L3 4L9 8.500Z M17 7L12 12L17 17Z M3 8.500V15.500L6.500 12Z" fill="#7c4fc4" /><path d="M17 0L24 3V21L17 24Z" fill="#a873ea" /></Ic>
      <Ic className="w-[40px]! ml-[5px] border-b-2 border-[#0078d7] pt-[2px]"><rect width="24" height="24" rx="6.500" fill="#3f8cfd" /><rect x="4" y="8" width="10.500" height="8" rx="2" fill="#fff" /><path d="M15.500 11L19.500 8.300V15.700L15.500 13Z" fill="#fff" /></Ic>
      <svg viewBox="0 0 24 18" className="ml-[935px] h-[18px] w-[22px] shrink-0"><circle cx="16" cy="6" r="6" fill="#2a86c8" /><path d="M6 17Q0 17 0 12T6 7Q7 1 13 2T19 7Q24 8 23 12T18 17Z" fill="#b8e2f8" /><path d="M5 15Q2 13 4 10" stroke="#fff" /></svg>
      <Fit className="ml-[7px] w-[20px] text-[#333]">0°C</Fit>
      <Fit className="ml-[10px] w-[55px] text-[#333]">Облачно</Fit>
      <ChevronUp className="ml-[17px] h-[16px] w-[16px] shrink-0" strokeWidth={1.8} />
      <svg viewBox="0 0 12 16" className="ml-[9px] h-[16px] w-[12px] shrink-0" fill="none"><rect x="3" width="6" height="11" rx="1" fill="#000" /><path d="M1 8V12.500H11V8M6 12.500V15.500M3 15.500H9" stroke="#000" /></svg>
      <svg viewBox="0 0 16 10" className="ml-[11px] h-[10px] w-[16px] shrink-0" fill="none"><path d="M.6 .6H13.400V9.400H.6Z M14.500 3V7M3 2.500V7.500" stroke="#000" strokeWidth="1.200" /></svg>
      <svg viewBox="0 0 14 14" className="ml-[10px] h-[14px] w-[14px] shrink-0" fill="none"><path d="M1 13Q1 2 13 1.500M4 13Q4 5 13 4.500M7 13Q7 8 13 7.500M10 13Q10 11 13 10.500" stroke="#333" strokeWidth="1.100" /><circle cx="12" cy="12.500" r="1.300" fill="#000" /></svg>
      <svg viewBox="0 0 17 14" className="ml-[7px] h-[14px] w-[17px] shrink-0" fill="none"><path d="M.6 4.500H3L6.500 1V13L3 9.500H.6Z M9 5Q10.500 7 9 9.500M11 3Q13.500 7 11 11.500" stroke="#000" /><path d="M13.500 1.500Q17 7 13.500 13" stroke="#999" /></svg>
      <Fit className="ml-[10px] w-[23px]">ENG</Fit>
      <div className="ml-[13px] flex w-[53px] shrink-0 flex-col items-center gap-[1px]">
        <Fit className="w-[27px]">21:40</Fit>
        <Fit className="w-[53px]">16.11.2021</Fit>
      </div>
      <svg viewBox="0 0 25 26" className="ml-[18px] mt-[6px] h-[26px] w-[25px] shrink-0"><path d="M1 2H17V14H9V18L5 14H1Z" fill="#000" /><path d="M3 5H15M3 8H15M3 11H11" stroke="#dde" /><circle cx="16.500" cy="17" r="8" fill="#d8d8d8" stroke="#777" /><text x="16.500" y="21.300" textAnchor="middle" fontSize="12" fontFamily="Open Sans" fill="#111">1</text></svg>
      <span className="ml-[12px] h-[40px] w-px bg-[#aab6c6]" />
    </footer>
  );
}

export default function App() {
  return (
    <div className="h-[1724px] w-[3574px] overflow-hidden bg-white font-['Open_Sans',sans-serif]">
      <div className="flex h-[1080px] w-[1920px] flex-col overflow-hidden">
        <TitleBar />
        <main className="flex h-[1017px] flex-col bg-[#1a1a1a]">
          <Gallery />
          <Middle />
          <Toolbar />
        </main>
        <Taskbar />
      </div>
    </div>
  );
}
